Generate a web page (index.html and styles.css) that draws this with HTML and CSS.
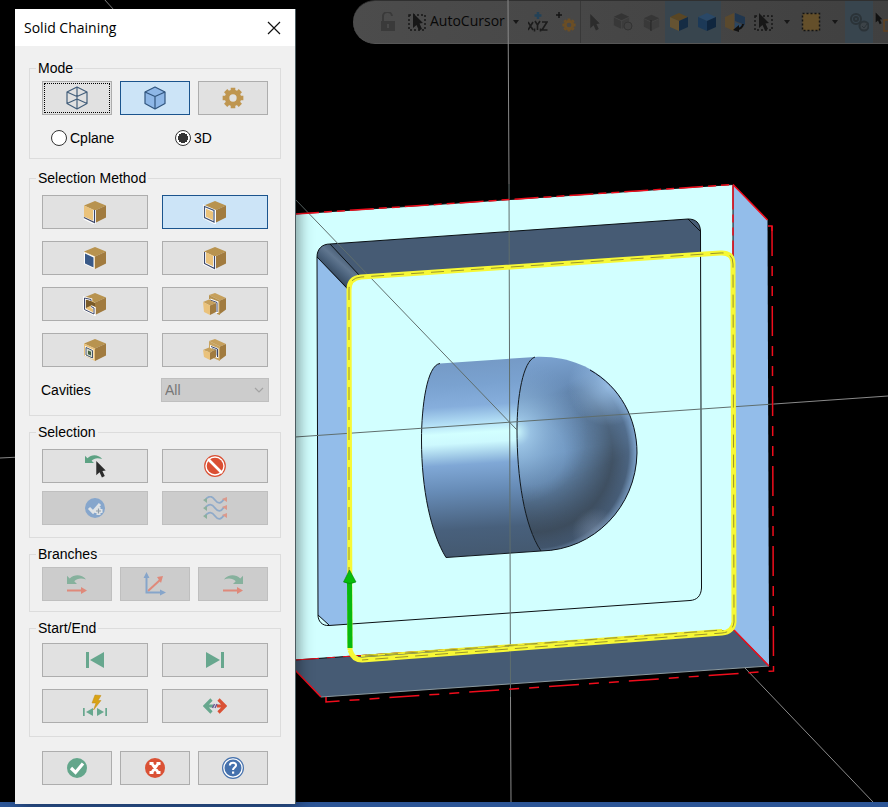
FILE: index.html
```html
<!DOCTYPE html>
<html lang="en">
<head>
<meta charset="utf-8">
<meta name="viewport" content="width=device-width, initial-scale=1">
<title>Solid Chaining</title>
<link rel="stylesheet" href="styles.css">
</head>
<body>
<svg class="sprite" aria-hidden="true">
  <symbol id="cube" viewBox="0 0 24 24">
    <path fill="#b8934f" d="M12 1 23 5.500 12 10.500 1 5.500z"/>
    <path fill="#a17b3f" d="M23 5.500V17.500L12 23V10.500z"/>
    <path fill="#eac27b" d="M1 5.500 12 10.500V23L1 17.500z"/>
  </symbol>
  <symbol id="pointer" viewBox="0 0 12 18">
    <path d="M1 0 11 10 7.500 10.500 10 16 7 17.500 4.500 12 1 15z"/>
  </symbol>
  <symbol id="swoop" viewBox="0 0 22 12">
    <path d="M0 2 3 5C8 0 16 0 21 6 15 4 11 5 8 8L11 11H0z"/>
  </symbol>
  <symbol id="gear" viewBox="0 0 24 24">
    <circle cx="12" cy="12" r="6.500" fill="none" stroke-width="5"/>
    <path fill="none" stroke-width="5" d="M12 4V.7M12 20v3.300M4 12H.7M20 12h3.300M17.700 6.300l2.300-2.300M6.300 6.300 4 4M17.700 17.700l2.300 2.300M6.300 17.700 4 20"/>
  </symbol>
  <symbol id="tbcube" viewBox="0 0 20 20">
    <path d="M10 1 19 5 10 9 1 5z"/>
    <path d="M1 6 9.500 10V19L1 15z" opacity=".8"/>
    <path d="M19 6 10.500 10V19L19 15z" opacity=".55"/>
  </symbol>
</svg>

<main class="stage">
  <nav class="toolbar" aria-label="Selection toolbar">
    <button class="tool" aria-label="Lock"><svg viewBox="0 0 20 20"><path d="M5 9V5a4 4 0 0 1 9-1" fill="none" stroke="#3a3a3a" stroke-width="2"/><path fill="#3a3a3a" d="M3 9h14v10H3z"/><path fill="#4a4a4a" d="M9 12h2v4H9z"/></svg></button>
    <button class="tool tool-text"><svg viewBox="0 0 20 20"><path d="M2 3h16v15H2z" fill="none" stroke="#171717" stroke-width="1.500" stroke-dasharray="2 2"/><use href="#pointer" x="5" y="1" width="12" height="18" fill="#171717"/></svg><span>AutoCursor</span></button>
    <button class="caret" aria-label="AutoCursor options"></button>
    <button class="tool" aria-label="Enter coordinates"><svg viewBox="0 0 20 20" fill="none" stroke="#1c1c1c" stroke-width="1.600"><path stroke="#234258" stroke-width="2.500" d="M10 0v7M6.500 3.500h7"/><path d="M0 10l5 8M5 10l-5 8M7 9l2.500 4L12 9M9.500 13v5M14 10h5l-5 8h5.500M6.500 16.500v3M12.500 16.500v3"/></svg></button>
    <button class="tool" aria-label="AutoCursor settings"><svg viewBox="0 0 20 20"><path d="M3 0v6M0 3h6" stroke="#151515" stroke-width="1.500"/><use href="#gear" x="6" y="6" width="14" height="14" stroke="#6b4e25"/></svg></button>
    <span class="divider"></span>
    <button class="tool" aria-label="Select"><svg viewBox="0 0 20 20"><use href="#pointer" x="4" y="2" width="12" height="17" fill="#2c2c2c"/></svg></button>
    <button class="tool" aria-label="Body"><svg viewBox="0 0 20 20"><use href="#tbcube" width="17" height="18" fill="#343434"/><circle cx="15" cy="14" r="4" fill="#424242" stroke="#333"/></svg></button>
    <button class="tool" aria-label="Edge"><svg viewBox="0 0 20 20"><use href="#tbcube" x="2" y="2" width="17" height="17" fill="#363636"/><path d="M10 8v11" stroke="#222"/></svg></button>
    <button class="tool tool-on" aria-label="Face"><svg viewBox="0 0 20 20"><path fill="#594624" d="M10 1 19 5 10 9 1 5z"/><path fill="#655332" d="M1 5 10 9V19L1 15z"/><path fill="#152c44" d="M19 5 10 9V19L19 15z"/></svg></button>
    <button class="tool tool-on" aria-label="Solid"><svg viewBox="0 0 20 20"><path fill="#2a4867" d="M10 1 19 5 10 9 1 5z"/><path fill="#1c3957" d="M1 5 10 9V19L1 15z"/><path fill="#10263e" d="M19 5 10 9V19L19 15z"/></svg></button>
    <button class="tool" aria-label="Back face"><svg viewBox="0 0 20 20"><path fill="#5a492d" d="M0 5 9 1V19L0 15z"/><path fill="#20364e" d="M10 1 20 5V13L10 9z"/><path fill="#2c4762" d="M10 10 20 14 10 18z"/><path d="M18 12c0 3-3 5-6 5" fill="none" stroke="#111" stroke-width="2"/><path fill="#111" d="M14 13v7l-6-2z"/></svg></button>
    <button class="tool" aria-label="Window select"><svg viewBox="0 0 20 20"><path d="M2 4h17v14H2z" fill="none" stroke="#171717" stroke-width="1.500" stroke-dasharray="2 2"/><use href="#pointer" x="5" y="1" width="12" height="18" fill="#171717"/></svg></button>
    <button class="caret caret-wide" aria-label="Window select options"></button>
    <button class="tool" aria-label="Area"><svg viewBox="0 0 20 20"><path d="M1.500 1.500h17v17h-17z" fill="#644f2a" stroke="#141414" stroke-width="1.500" stroke-dasharray="2 2"/></svg></button>
    <button class="caret caret-wide" aria-label="Area options"></button>
    <button class="tool tool-on" aria-label="Verify selection"><svg viewBox="0 0 20 20" fill="none" stroke="#2b3338" stroke-width="2"><circle cx="7" cy="7" r="5"/><circle cx="7" cy="7" r="2"/><circle cx="15" cy="14" r="4.500" fill="#3c4348"/><path d="m13 14 2 2 3-4" stroke-width="1"/></svg></button>
    <button class="tool tool-last" aria-label="Quick select"><svg viewBox="0 0 20 20"><use href="#pointer" x="0" y="0" width="8" height="13" fill="#111"/><path d="M9 8h10v11H9z" fill="none" stroke="#60401f" stroke-width="1.500"/></svg></button>
  </nav>

  <svg class="scene" viewBox="0 0 888 807" preserveAspectRatio="xMinYMin slice" role="img" aria-label="Solid model with a pocket, a domed boss and a chained edge">
    <defs>
      <linearGradient id="cyl" gradientUnits="userSpaceOnUse" x1="478" y1="360" x2="490" y2="555">
        <stop offset="0" stop-color="#759ac6"/><stop offset=".12" stop-color="#7aa2d0"/><stop offset=".23" stop-color="#86aedc"/>
        <stop offset=".32" stop-color="#b4e0f6"/><stop offset=".37" stop-color="#d2ffff"/><stop offset=".42" stop-color="#cdf9fe"/><stop offset=".53" stop-color="#80a8d6"/>
        <stop offset=".66" stop-color="#678cb7"/><stop offset=".86" stop-color="#48607c"/><stop offset="1" stop-color="#445970"/>
      </linearGradient>
      <linearGradient id="dome" gradientUnits="userSpaceOnUse" x1="540" y1="357" x2="570" y2="548">
        <stop offset="0" stop-color="#7ba2d0"/><stop offset=".2" stop-color="#6488b2"/><stop offset=".5" stop-color="#6c93bd"/>
        <stop offset=".75" stop-color="#587799"/><stop offset="1" stop-color="#43576e"/>
      </linearGradient>
      <radialGradient id="glow" gradientUnits="userSpaceOnUse" cx="516" cy="432" r="72">
        <stop offset="0" stop-color="#d0fdff"/><stop offset=".2" stop-color="#a9d3f1" stop-opacity=".75"/><stop offset="1" stop-color="#7ba2d0" stop-opacity="0"/>
      </radialGradient>
      <radialGradient id="shade" gradientUnits="userSpaceOnUse" cx="533" cy="453" r="106">
        <stop offset=".3" stop-color="#3a4857" stop-opacity="0"/><stop offset=".75" stop-color="#3a4857" stop-opacity=".85"/>
        <stop offset=".9" stop-color="#40536a" stop-opacity=".7"/><stop offset=".97" stop-color="#86a9cf" stop-opacity=".6"/>
      </radialGradient>
      <linearGradient id="shadeFade" gradientUnits="userSpaceOnUse" x1="556" y1="390" x2="596" y2="470">
        <stop offset="0" stop-color="#000"/><stop offset=".4" stop-color="#888"/><stop offset="1" stop-color="#fff"/>
      </linearGradient>
      <mask id="lowerRight"><path fill="url(#shadeFade)" d="M500 340h150v230H500z"/></mask>
      <radialGradient id="rim" gradientUnits="userSpaceOnUse" cx="608" cy="386" r="40">
        <stop offset="0" stop-color="#a9d0f6" stop-opacity=".7"/><stop offset="1" stop-color="#a9d0f6" stop-opacity="0"/>
      </radialGradient>
      <radialGradient id="bounce" gradientUnits="userSpaceOnUse" cx="596" cy="532" r="24">
        <stop offset="0" stop-color="#7e91ab" stop-opacity=".6"/><stop offset="1" stop-color="#7e91ab" stop-opacity="0"/>
      </radialGradient>
      <linearGradient id="fillet" gradientUnits="userSpaceOnUse" x1="330" y1="274" x2="347" y2="255">
        <stop offset="0" stop-color="#34475c"/><stop offset=".35" stop-color="#4c637d"/><stop offset=".6" stop-color="#60768f"/><stop offset="1" stop-color="#41566d"/>
      </linearGradient>
      <path id="domeShape" d="M535 357C596 354 637 399 637 453 636 507 594 550 541 551 524 526 517 476 517 430 517 397 523 361 535 357z"/>
    </defs>

    <g stroke="#8a8a8a" fill="none">
      <path d="M104-1 114 10M0 458 20 457M745 668 873 802"/>
    </g>

    <path fill="#d2ffff" d="M295 214 733 184.500 734 630 295 660z"/>
    <path fill="#93bdea" d="M733 184.500 767.500 220 769 666 734 630z"/>
    <path fill="#465b74" d="M295 660 734 630 769 666 321 697 295 670z"/>
    <path d="M321 697 769 666" stroke="#8b999f" fill="none"/>

    <path fill="#465b74" d="M330 244 688 219C696 219 700 223 700.500 231L701 253 358 278z"/>
    <path fill="#93bdea" d="M317 257 348 289V624L329 625.500C322 626 318 621 318 615z"/>
    <path fill="url(#fillet)" d="M317 257C317 249 322 244 330 244L360 276C352 278 349 281 348 290z"/>
    <path fill="#d2ffff" d="M318 615 329 625.500C322 626 318 621 318 615z"/>
    <g fill="none" stroke="#0b1014">
      <path d="M317 257C317 249 322 244 330 244L688 219C696 219 700 223 700.500 231L701.500 588C701 596 697 600 690 600.500L329 625.500C322 626 318 621 318 615z"/>
      <path d="M317 257 348 289M330 244 360 276M688 219 700 231M318 615 329 625"/>
    </g>

    <path fill="url(#cyl)" d="M440 363.500 535 357C523 361 517 397 517 430 517 476 524 526 541 551L446 557.500C431 533 421.500 490 421.500 440 421.500 406 427 365 440 363.500z"/>
    <use href="#domeShape" fill="url(#dome)"/>
    <g mask="url(#lowerRight)"><use href="#domeShape" fill="url(#shade)"/></g>
    <use href="#domeShape" fill="url(#rim)"/>
    <use href="#domeShape" fill="url(#bounce)"/>
    <use href="#domeShape" fill="url(#glow)"/>
    <g fill="none" stroke="#10161c">
      <path d="M440 363.500C427 365 421.500 406 421.500 440 421.500 490 431 533 446 557.500L541 551C524 526 517 476 517 430 517 397 523 361 535 357"/>
      <path d="M590 370C620 387 637 418 637 453 636 507 594 550 541 551"/>
    </g>

    <g fill="none" stroke="#5f6e6d">
      <path d="M295 199 517 430M295 437 774 404"/>
      <path stroke="#8a8a8a" d="M774 404 888 396M508 0 509 184M510.500 697 511 802"/>
      <path d="M509 184 510.500 697"/>
    </g>

    <g fill="none" stroke="#f00d1c">
      <path stroke="#101010" d="M295 214 733 184.500M733 184.500V256M295 660 734 630 769 666"/>
      <path stroke-width="1.500" stroke-dasharray="24 5 8 5 8 5" d="M295 214 733 184.500V256"/>
      <path d="M733 184.500 767.500 220M734 630 769 666M295 670 321 697" stroke-width="1.500"/>
      <path stroke-dasharray="24 8 8 8" d="M295 660 734 630"/>
      <path stroke-width="1.500" stroke-dasharray="30 10 10 10 10 10" stroke-dashoffset="-4" d="M768 226H772L773.500 671 326 702V697"/>
      <path stroke-width="1.500" d="M768 226H772V231"/>
    </g>

    <path fill="none" stroke="#f7f835" stroke-width="5" d="M350 650 349 290Q349 278 361 277L720 253Q733 252 733 264L734 622Q733 632 722 633L362 660Q353 660 350 650"/>
    <path fill="none" stroke="#f1ef2d" stroke-width="2" d="M361 656 722 630"/>
    <g fill="none" stroke="#99952c">
      <path stroke-dasharray="13 7" d="M349 580V290Q349 278 361 277L720 253Q733 252 733 264L734 622Q733 632 722 633L362 660"/>
      <path stroke-dasharray="13 7" d="M365 656 722 630"/>
    </g>
    <path fill="none" stroke="#07b90e" stroke-width="5" d="M350 648 349.500 582"/>
    <path fill="#05bd0c" stroke="#087d0b" stroke-width=".6" d="M349.500 570 356 582Q350 585 343.500 582z"/>
  </svg>

  <section class="dialog" role="dialog" aria-labelledby="dialog-title">
    <header class="titlebar">
      <h1 id="dialog-title">Solid Chaining</h1>
      <button class="close" aria-label="Close"><svg viewBox="0 0 14 14"><path d="M1 1 13 13M13 1 1 13" stroke="#111" stroke-width="1.200"/></svg></button>
    </header>
    <form class="content">
      <fieldset class="group group-mode">
        <legend>Mode</legend>
        <div class="thirds">
          <button type="button" class="btn focused" aria-label="Wireframe"><svg viewBox="0 0 24 24" fill="none" stroke="#445f7b" stroke-width="1.200" stroke-linejoin="round"><path d="M12 1 22 6V17.500L12 23 2 17.500V6zM2 6 12 10.500 22 6M12 1V23M2 17.500 12 13 22 17.500"/></svg></button>
          <button type="button" class="btn active" aria-label="Solids"><svg viewBox="0 0 24 24" stroke="#31557e" stroke-width="1.200" stroke-linejoin="round"><path fill="#8eb7e7" d="M12 1 22 6V17.500L12 23 2 17.500V6z"/><path fill="none" d="M2 6 12 10.500 22 6M12 10.500V23"/></svg></button>
          <button type="button" class="btn" aria-label="Options"><svg viewBox="0 0 24 24"><use href="#gear" x="1" y="1" width="22" height="22" stroke="#bf9650"/></svg></button>
        </div>
        <div class="radios">
          <label><input type="radio" name="plane">Cplane</label>
          <label><input type="radio" name="plane" checked>3D</label>
        </div>
      </fieldset>

      <fieldset class="group group-method">
        <legend>Selection Method</legend>
        <div class="halves roomy">
          <button type="button" class="btn" aria-label="Edge"><svg viewBox="0 0 24 24"><use href="#cube" width="24" height="24"/><path d="M1 18 11.500 23V10" fill="none" stroke="#fff" stroke-width="3"/><path d="M1 17.500 11.500 22.500V10" fill="none" stroke="#3c4668" stroke-width="1.200"/></svg></button>
          <button type="button" class="btn active" aria-label="Loop"><svg viewBox="0 0 24 24"><use href="#cube" width="24" height="24"/><path d="M1.500 6.500 11.500 11V22.500L1.500 17.500z" fill="#eac27b" stroke="#fff" stroke-width="3"/><path d="M1.500 6.500 11 10.500V22L1.500 17.500z" fill="none" stroke="#415477" stroke-width="1.200"/></svg></button>
          <button type="button" class="btn" aria-label="Face"><svg viewBox="0 0 24 24"><use href="#cube" width="24" height="24"/><path d="M1 6 11.500 10.500V23L1 18z" fill="#fff"/><path fill="#3a5a88" d="M2 7.500 10.500 11.500V21.500L2 17.500z"/></svg></button>
          <button type="button" class="btn" aria-label="Partial loop"><svg viewBox="0 0 24 24"><use href="#cube" width="24" height="24"/><path d="M1.500 6V17.500L11.500 22.500V10" fill="none" stroke="#fff" stroke-width="3"/><path d="M1.500 6V17.500L11.500 22.500V10" fill="none" stroke="#3c4668" stroke-width="1.200"/></svg></button>
          <button type="button" class="btn" aria-label="Outer open edges"><svg viewBox="0 0 24 24"><use href="#cube" width="24" height="24"/><path fill="#7a5b29" d="M1 6 12 11V15L8 13.500 1 17z"/><path fill="#eac27b" d="m2 17 6-3 4 2v6z"/><path d="M8 9V7.500L1.500 6V17.500L11.500 22.500V16L8 14.500" fill="none" stroke="#fff" stroke-width="2.600"/><path d="M8 9V7.500L1.500 6V17.500L11 22V16L8 14.500" fill="none" stroke="#3c4668"/></svg></button>
          <button type="button" class="btn" aria-label="Outer shared edges"><svg viewBox="0 0 24 24"><path fill="#c6a05c" d="M6 3 12 1 23 6 17 8.500z"/><path fill="#a17b3f" d="M23 6V17.500L17 22V8.500z"/><path fill="#b8934f" d="M6 3 17 8.500V23L14 22V10L6 7z"/><path d="M7 8 14 10.500V21" fill="none" stroke="#fff" stroke-width="3"/><path d="M7 8 14 10.500V20" fill="none" stroke="#3c4668"/><path fill="#c6a05c" d="M0 10 6 7.500 13 11 7 13.500z"/><path fill="#eac27b" d="M0 10 7 13.500V23L1 20z"/><path fill="#a17b3f" d="M13 11V20L7 23V13.500z"/></svg></button>
          <button type="button" class="btn" aria-label="Inner edges"><svg viewBox="0 0 24 24"><use href="#cube" width="24" height="24"/><path d="M3 9.500 9.500 12.500V20L3 17z" fill="#fff" stroke="#fff" stroke-width="2"/><path d="M3 9.500 9.500 12.500V20L3 17z" fill="#d9dfd0" stroke="#46556c"/><path fill="#46603f" d="m5 12.500 3 1.200v3.800l-3-1.200z"/></svg></button>
          <button type="button" class="btn" aria-label="Inner shared edges"><svg viewBox="0 0 24 24"><path fill="#c6a05c" d="M6 3 12 1 23 6 17 8.500z"/><path fill="#a17b3f" d="M23 6V17.500L17 22V8.500z"/><path fill="#c8a461" d="M6 3 17 8.500V23L6 18z"/><path d="M8 8.500 14.500 11V19L8 17z" fill="#697987" stroke="#fff" stroke-width="2"/><path d="M8 8.500 14.500 11V19" fill="none" stroke="#3c4668"/><path fill="#c6a05c" d="M0 12 6 9.500 13 12 7 14.500z"/><path fill="#eac27b" d="M0 12 7 14.500V22L1 19z"/><path fill="#a17b3f" d="M13 12V19L7 22V14.500z"/></svg></button>
        </div>
        <div class="cavities">
          <label for="cavities">Cavities</label>
          <span class="select-wrap">
            <select id="cavities" disabled><option>All</option></select>
            <svg viewBox="0 0 10 6"><path d="m1 1 4 4 4-4" fill="none" stroke="#a3a3a3" stroke-width="1.200"/></svg>
          </span>
        </div>
      </fieldset>

      <fieldset class="group group-selection">
        <legend>Selection</legend>
        <div class="halves">
          <button type="button" class="btn" aria-label="Unselect last"><svg viewBox="0 0 24 24"><use href="#swoop" x="2" y="0" width="18" height="10" fill="#5da283"/><use href="#pointer" x="12" y="7" width="12" height="17" fill="#2c2c2c"/></svg></button>
          <button type="button" class="btn" aria-label="Unselect all"><svg viewBox="0 0 24 24"><circle cx="12" cy="12" r="10.300" fill="#fff" stroke="#da5135" stroke-width="1.200"/><circle cx="12" cy="12" r="8.300" fill="#da4f33"/><path d="m5 5 14 14" stroke="#fff" stroke-width="2.600"/></svg></button>
          <button type="button" class="btn" disabled aria-label="Add chain"><svg viewBox="0 0 24 24"><circle cx="12" cy="12" r="10" fill="#86a6cc"/><path d="m6 12 4 4 7-8" fill="none" stroke="#dfe3e6" stroke-width="3"/><path d="M15.500 11v8M11.500 15h8" stroke="#dfe3e6" stroke-width="4"/><path d="M15.500 12.500v5M13 15h5" stroke="#909da8" stroke-width="1.200"/></svg></button>
          <button type="button" class="btn" disabled aria-label="Reorder chains"><svg viewBox="0 0 24 24" fill="none" stroke="#8faac9" stroke-width="1.800"><path d="M2 4c4-5 7-4 10 0s6 4 9-1M2 12c4-5 7-4 10 0s6 4 9-1M2 20c4-5 7-4 10 0s6 4 9-1"/><path stroke="none" fill="#8db09d" d="M0 4l4-2v5zM0 12l4-2v5zM0 20l4-2v5z"/><path stroke="none" fill="#dc998b" d="M24 1v5l-5-3zM24 9v5l-5-3zM24 17v5l-5-3z"/></svg></button>
        </div>
      </fieldset>

      <fieldset class="group group-branches">
        <legend>Branches</legend>
        <div class="thirds">
          <button type="button" class="btn" disabled aria-label="Previous branch"><svg viewBox="0 0 24 24"><use href="#swoop" x="2" y="2" width="20" height="11" fill="#86b19d"/><path fill="none" stroke="#df897a" stroke-width="2" d="M2 18.500h15"/><path fill="#df897a" d="m16 15 6 3.500-6 3.500z"/></svg></button>
          <button type="button" class="btn" disabled aria-label="Branch direction"><svg viewBox="0 0 24 24" fill="none" stroke-width="2"><path stroke="#df897a" d="M5 19 17 8"/><path fill="#df897a" d="m14 5 6-1-2 7z"/><path stroke="#86a5ca" d="M3.500 5v15.500H18"/><path fill="#86a5ca" d="m.500 6 3-6 3 6zM17 17.500l6 3-6 3z"/></svg></button>
          <button type="button" class="btn" disabled aria-label="Next branch"><svg viewBox="0 0 24 24"><g transform="translate(24) scale(-1 1)"><use href="#swoop" x="2" y="2" width="20" height="11" fill="#86b19d"/></g><path fill="none" stroke="#df897a" stroke-width="2" d="M2 18.500h15"/><path fill="#df897a" d="m16 15 6 3.500-6 3.500z"/></svg></button>
        </div>
      </fieldset>

      <fieldset class="group group-ends">
        <legend>Start/End</legend>
        <div class="halves roomy">
          <button type="button" class="btn" aria-label="Move start"><svg viewBox="0 0 24 24" fill="#67a78e"><path d="M3 4h3v16H3zM21 4v16L7 12z"/></svg></button>
          <button type="button" class="btn" aria-label="Move end"><svg viewBox="0 0 24 24" fill="#67a78e"><path d="M18 4h3v16h-3zM3 4v16l14-8z"/></svg></button>
          <button type="button" class="btn" aria-label="Dynamic start and end"><svg viewBox="0 0 24 24"><path fill="#67a78e" d="M0 14h1.700v8H0zM22.300 14H24v8h-1.700zM10 14v8l-7-4zM14 14v8l7-4z"/><path fill="#d8a315" stroke="#c28b16" stroke-width=".5" d="m12 1 6 .5-3 5h3L10.500 16 13 9H9z"/></svg></button>
          <button type="button" class="btn" aria-label="Reverse"><svg viewBox="0 0 24 24" fill="none" stroke-width="3.200"><path stroke="#67a78e" d="M8.500 5.500 2 12l6.500 6.500M2 12h8"/><path stroke="#da5135" d="M15.500 5.500 22 12l-6.500 6.500M22 12h-8"/><path stroke="#6d5b94" stroke-width="1.500" d="m9.500 14 2-4M12 14l2-4"/></svg></button>
        </div>
      </fieldset>

      <div class="thirds actions">
        <button type="button" class="btn" aria-label="OK"><svg viewBox="0 0 24 24"><circle cx="12" cy="12" r="10" fill="#63a68b"/><path d="m6 12 4.500 4.500 7.500-9" fill="none" stroke="#fff" stroke-width="3.200"/></svg></button>
        <button type="button" class="btn" aria-label="Cancel"><svg viewBox="0 0 24 24"><circle cx="12" cy="12" r="10" fill="#da5135"/><path d="m8.500 7 7 10M15.500 7l-7 10M6.500 7.500h4M13.500 7.500h4M6.500 16.500h4M13.500 16.500h4" fill="none" stroke="#fff" stroke-width="3"/></svg></button>
        <button type="button" class="btn" aria-label="Help"><svg viewBox="0 0 24 24"><circle cx="12" cy="12" r="10.400" fill="#fff" stroke="#4571ad" stroke-width="1.200"/><circle cx="12" cy="12" r="8.500" fill="#4571ad"/><path d="M8.800 9.500C9 5.500 15.500 6 15 9.500c-.3 2-3 2-3 4.500" fill="none" stroke="#fff" stroke-width="2"/><path fill="#fff" d="M11 15.500h2.200v2.200H11z"/></svg></button>
      </div>
    </form>
  </section>
</main>
<footer class="statusbar"></footer>
</body>
</html>
```

FILE: styles.css
```css
* {
  box-sizing: border-box;
}

body {
  display: flex;
  flex-direction: column;
  min-height: 100vh;
  margin: 0;
  overflow: hidden;
  background: #000;
  color: #000;
  font: 14px/16px "Liberation Sans", Arial, sans-serif;
}

button {
  padding: 0;
  border: 0;
  background: none;
  font: inherit;
  color: inherit;
}

.sprite {
  position: absolute;
  width: 0;
  height: 0;
}

.stage {
  flex: 1;
}

.statusbar {
  height: 5px;
  background: #2c5596;
}

/* Model view, drawn over the dimmed toolbar */
.scene {
  position: absolute;
  inset: 0;
  width: 100%;
  height: 100%;
  pointer-events: none;
}

/* Toolbar */
.toolbar {
  position: absolute;
  top: 0;
  left: 353px;
  right: 0;
  display: flex;
  height: 44px;
  padding-left: 21px;
  overflow: hidden;
  border-top: 1px solid #303030;
  border-bottom: 1px solid #565656;
  border-radius: 22px 0 0 22px;
  background: linear-gradient(90deg, #4c4c4c, #404040);
}

.tool {
  display: flex;
  flex: none;
  align-items: center;
  justify-content: center;
  width: 28px;
}

.tool svg {
  flex: none;
  width: 20px;
  height: 20px;
}

.tool-on {
  background: #38454e;
}

.tool-last {
  justify-content: flex-start;
  padding-left: 2px;
}

.tool-text {
  justify-content: flex-start;
  gap: 3px;
  width: 106px;
  padding-left: 5px;
  color: #080808;
  font: 14px/20px "Open Sans", "Noto Sans", sans-serif;
}

.tool-text span {
  padding-bottom: 3px;
}

.caret {
  display: flex;
  flex: none;
  align-items: center;
  justify-content: center;
  width: 16px;
}

.caret-wide {
  width: 20px;
}

.caret::before {
  content: "";
  border: 3px solid transparent;
  border-top: 4px solid #171717;
  border-bottom: 0;
}

.divider {
  flex: none;
  width: 1px;
  background: #383838;
}

/* Dialog */
.dialog {
  position: absolute;
  top: 9px;
  left: 15px;
  width: 280px;
  background: #f0f0f0;
  box-shadow: 1px 0 0 #4c5c60, 4px 2px 14px rgba(0, 0, 0, 0.4);
}

.titlebar {
  display: flex;
  align-items: center;
  justify-content: space-between;
  height: 37px;
  padding: 0 14px 0 9px;
  background: #fff;
}

.titlebar h1 {
  margin: 0;
  font: 14px/20px "Open Sans", "Noto Sans", sans-serif;
}

.close {
  display: flex;
}

.close svg {
  width: 14px;
  height: 14px;
}

.content {
  padding: 14px 14px 19px;
}

.group {
  min-width: 0;
  margin: 0 0 8px;
  padding: 9px 12px 13px;
  border: 1px solid #dcdcdc;
}

.group legend {
  margin-left: -6px;
  padding: 0 2px;
}

.group-mode {
  margin-bottom: 11px;
  padding-top: 5px;
  padding-bottom: 10px;
}

.group-selection {
  padding-bottom: 12px;
}

.group-branches {
  padding-top: 5px;
  padding-bottom: 10px;
}

.group-ends {
  padding-top: 7px;
}

.thirds,
.halves {
  display: grid;
  grid-template-columns: repeat(3, 1fr);
  gap: 8px;
}

.halves {
  grid-template-columns: repeat(2, 1fr);
  column-gap: 14px;
}

.roomy {
  row-gap: 12px;
}

.actions {
  margin-top: 14px;
  padding: 0 13px;
}

.btn {
  display: flex;
  align-items: center;
  justify-content: center;
  height: 34px;
  border: 1px solid #adadad;
  background: #e1e1e1;
}

.btn svg {
  width: 24px;
  height: 24px;
}

.btn.active {
  border-color: #1b548d;
  background: #cce4f7;
}

.btn.focused {
  outline: 1px dotted #000;
  outline-offset: -3px;
}

.btn:disabled {
  border-color: #bfbfbf;
  background: #ccc;
}

.radios {
  display: grid;
  grid-template-columns: 124px 1fr;
  margin: 13px 0 0 9px;
}

.radios label {
  display: flex;
  align-items: center;
  gap: 3px;
  height: 20px;
}

.radios input {
  appearance: none;
  width: 16px;
  height: 16px;
  margin: 0;
  border: 1px solid #333;
  border-radius: 50%;
  background: #fff;
}

.radios input:checked {
  background: radial-gradient(circle, #333 0 5px, #fff 5px);
}

.cavities {
  display: flex;
  align-items: center;
  justify-content: space-between;
  margin: 11px -1px 0;
}

.select-wrap {
  display: flex;
  position: relative;
  width: 108px;
}

.select-wrap select {
  appearance: none;
  width: 100%;
  height: 24px;
  padding: 0 3px;
  border: 1px solid #bfbfbf;
  border-radius: 0;
  background: #ccc;
  color: #777;
  font: inherit;
  opacity: 1;
}

.select-wrap svg {
  position: absolute;
  top: 9px;
  right: 5px;
  width: 10px;
  height: 6px;
}
```
